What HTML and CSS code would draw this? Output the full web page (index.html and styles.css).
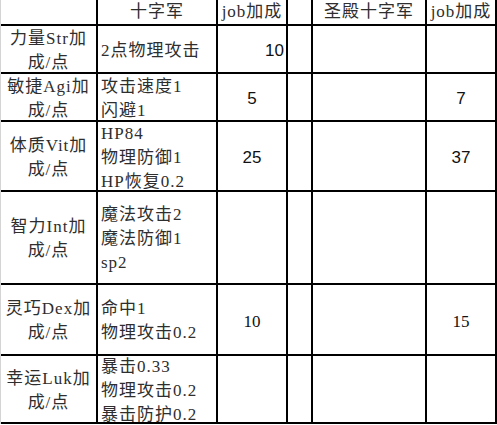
FILE: index.html
```html
<!DOCTYPE html>
<html lang="zh-CN">
<head>
<meta charset="utf-8">
<title>十字军</title>
<link rel="stylesheet" href="styles.css">
</head>
<body>
<div class="sheet">
  <div class="cell head"></div>
  <div class="cell head c">十字军</div>
  <div class="cell head c">job加成</div>
  <div class="cell head"></div>
  <div class="cell head c">圣殿十字军</div>
  <div class="cell head c">job加成</div>

  <div class="cell attr">力量Str加<br>成/点</div>
  <div class="cell desc">2点物理攻击</div>
  <div class="cell num r">10</div>
  <div class="cell"></div>
  <div class="cell"></div>
  <div class="cell"></div>

  <div class="cell attr">敏捷Agi加<br>成/点</div>
  <div class="cell desc">攻击速度1<br>闪避1</div>
  <div class="cell num">5</div>
  <div class="cell"></div>
  <div class="cell"></div>
  <div class="cell num">7</div>

  <div class="cell attr">体质Vit加<br>成/点</div>
  <div class="cell desc">HP84<br>物理防御1<br>HP恢复0.2</div>
  <div class="cell num">25</div>
  <div class="cell"></div>
  <div class="cell"></div>
  <div class="cell num">37</div>

  <div class="cell attr">智力Int加<br>成/点</div>
  <div class="cell desc">魔法攻击2<br>魔法防御1<br>sp2</div>
  <div class="cell"></div>
  <div class="cell"></div>
  <div class="cell"></div>
  <div class="cell"></div>

  <div class="cell attr">灵巧Dex加<br>成/点</div>
  <div class="cell desc">命中1<br>物理攻击0.2</div>
  <div class="cell num serif">10</div>
  <div class="cell"></div>
  <div class="cell"></div>
  <div class="cell num serif">15</div>

  <div class="cell attr">幸运Luk加<br>成/点</div>
  <div class="cell desc">暴击0.33<br>物理攻击0.2<br>暴击防护0.2</div>
  <div class="cell"></div>
  <div class="cell"></div>
  <div class="cell"></div>
  <div class="cell"></div>
</div>
</body>
</html>
```

FILE: styles.css
```css
html, body {
  margin: 0;
  padding: 0;
  background: #ffffff;
}

body {
  font-family: "Liberation Serif", "Noto Sans CJK SC", serif;
  font-size: 17px;
  color: #2e2e2e;
}

.sheet {
  display: grid;
  grid-template-columns: 95px 118px 68px 23px 112px 68px;
  grid-template-rows: 24px 46px 46px 68px 91px 69px 66px;
  gap: 2px;
  width: 497px;
  box-sizing: border-box;
  background: #000000;
  border-left: 1px solid #d4d4d4;
  padding: 0 2px 2px 0;
  overflow: hidden;
}

.cell {
  background: #ffffff;
  display: flex;
  flex-direction: column;
  justify-content: center;
  line-height: 24px;
  overflow: hidden;
  white-space: nowrap;
}

.head {
  line-height: 24px;
  letter-spacing: 1px;
}

.c {
  align-items: center;
  text-align: center;
}

.attr {
  text-align: center;
  padding-top: 3px;
  letter-spacing: 1px;
}

.desc {
  padding: 3px 0 0 3px;
  letter-spacing: 1px;
}

.num {
  font-family: "Liberation Sans", sans-serif;
  text-align: center;
  padding-top: 4px;
  color: #111111;
}

.num.r {
  text-align: right;
  padding-right: 2px;
}

.num.serif {
  font-family: "Liberation Serif", serif;
}
```
